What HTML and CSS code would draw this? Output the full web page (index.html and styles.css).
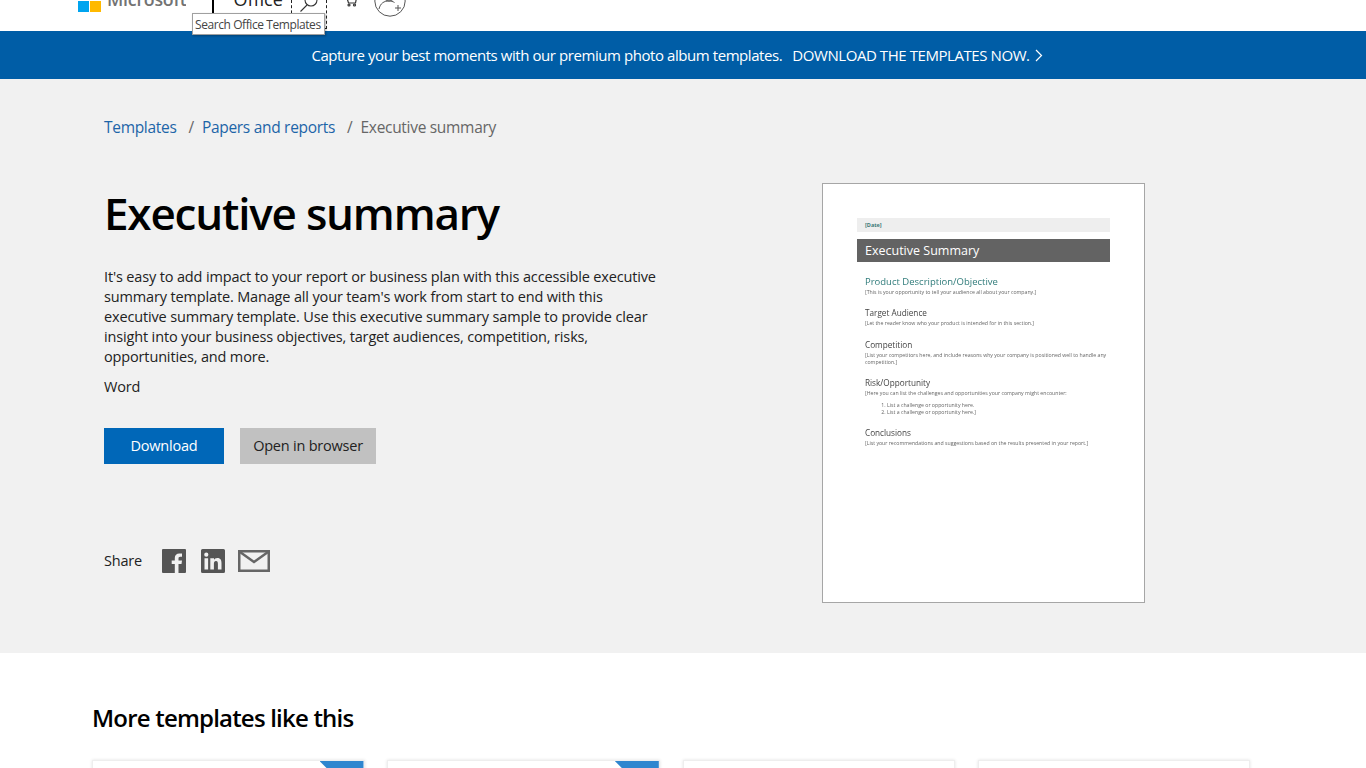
FILE: index.html
```html
<!DOCTYPE html>
<html lang="en">
<head>
<meta charset="utf-8">
<title>Executive summary</title>
<link rel="stylesheet" href="styles.css">
</head>
<body>
<header class="topbar">
  <div class="ms-logo">
    <svg class="ms-squares" width="23" height="23" viewBox="0 0 23 23"><rect x="0" y="0" width="11" height="11" fill="#f25022"/><rect x="12" y="0" width="11" height="11" fill="#7fba00"/><rect x="0" y="12" width="11" height="11" fill="#00a4ef"/><rect x="12" y="12" width="11" height="11" fill="#ffb900"/></svg>
    <span class="ms-name">Microsoft</span>
  </div>
  <div class="divider"></div>
  <span class="office">Office</span>
  <div class="search-box">
    <svg width="20" height="20" viewBox="0 0 20 20" fill="none" stroke="#333" stroke-width="1.1"><circle cx="12" cy="7" r="6"/><path d="M8 12 L1.500 18.500"/></svg>
  </div>
  <svg class="cart" width="14" height="14" viewBox="0 0 14 14" fill="none" stroke="#333" stroke-width="1.2"><path d="M1 0h2l1.500 5h7l1-5"/><circle cx="5" cy="7" r="1"/><circle cx="10.500" cy="7" r="1"/></svg>
  <svg class="person" width="32" height="32" viewBox="0 0 32 32" fill="none" stroke="#555" stroke-width="1"><circle cx="16" cy="16" r="15.200"/><circle cx="15" cy="10" r="6"/><path d="M5 24c1.500-6 5-8 10-8 2 0 4 .5 5.500 1.500"/><path d="M21 23h6M24 20v6"/></svg>
  <div class="tooltip">Search Office Templates</div>
</header>

<a class="banner" href="#">
  <span>Capture your best moments with our premium photo album templates.</span>
  <span class="banner-cta">DOWNLOAD THE TEMPLATES NOW.</span>
  <svg width="8" height="13" viewBox="0 0 8 13" fill="none" stroke="#fff" stroke-width="1.2"><path d="M1 1l5.500 5.500L1 12"/></svg>
</a>

<section class="hero">
  <nav class="crumbs">
    <a href="#">Templates</a><span class="sep">/</span><a href="#">Papers and reports</a><span class="sep">/</span><span class="current">Executive summary</span>
  </nav>
  <div class="hero-body">
    <div class="info">
      <h1>Executive summary</h1>
      <p class="desc">It's easy to add impact to your report or business plan with this accessible executive summary template. Manage all your team's work from start to end with this executive summary template. Use this executive summary sample to provide clear insight into your business objectives, target audiences, competition, risks, opportunities, and more.</p>
      <p class="app">Word</p>
      <div class="actions">
        <a class="btn primary" href="#">Download</a>
        <a class="btn secondary" href="#">Open in browser</a>
      </div>
      <div class="share">
        <span class="share-label">Share</span>
        <svg class="ic-fb" width="24" height="24" viewBox="0 0 24 24"><path fill="#555" d="M1 0h22a1 1 0 0 1 1 1v22a1 1 0 0 1-1 1h-6.500v-9h3l.5-3.500h-3.500V9.500c0-1 .4-1.700 1.800-1.700H20V4.600c-.4 0-1.500-.1-2.700-.1-2.700 0-4.500 1.600-4.500 4.600v2.400H9.700V15h3.100v9H1a1 1 0 0 1-1-1V1a1 1 0 0 1 1-1z"/></svg>
        <svg class="ic-in" width="24" height="24" viewBox="0 0 24 24"><path fill="#555" fill-rule="evenodd" d="M1.500 0h21A1.500 1.500 0 0 1 24 1.500v21a1.500 1.500 0 0 1-1.500 1.500h-21A1.500 1.500 0 0 1 0 22.500v-21A1.500 1.500 0 0 1 1.500 0zM3.500 9.200V20.500h3.600V9.200zM5.300 3.600a2.100 2.100 0 1 0 0 4.200 2.100 2.100 0 0 0 0-4.200zM9.300 9.200V20.500h3.600v-5.600c0-1.500.3-2.900 2.100-2.900s1.900 1.700 1.900 3v5.500h3.600v-6.200c0-3-.7-5.400-4.200-5.400-1.700 0-2.800.9-3.300 1.800V9.200z"/></svg>
        <svg class="ic-mail" width="32" height="22" viewBox="0 0 32 22" fill="none" stroke="#666" stroke-width="2.500"><rect x="1.250" y="1.250" width="29.500" height="19.500"/><path d="M2 2l14 10L30 2"/></svg>
      </div>
    </div>
    <figure class="doc">
      <div class="doc-date">[Date]</div>
      <div class="doc-title">Executive Summary</div>
      <div class="doc-section first">
        <div class="doc-h teal">Product Description/Objective</div>
        <p class="doc-p">[This is your opportunity to tell your audience all about your company.]</p>
      </div>
      <div class="doc-section">
        <div class="doc-h">Target Audience</div>
        <p class="doc-p">[Let the reader know who your product is intended for in this section.]</p>
      </div>
      <div class="doc-section">
        <div class="doc-h">Competition</div>
        <p class="doc-p">[List your competitors here, and include reasons why your company is positioned well to handle any competition.]</p>
      </div>
      <div class="doc-section">
        <div class="doc-h">Risk/Opportunity</div>
        <p class="doc-p">[Here you can list the challenges and opportunities your company might encounter:</p>
        <ol class="doc-list">
          <li>List a challenge or opportunity here.</li>
          <li>List a challenge or opportunity here.]</li>
        </ol>
      </div>
      <div class="doc-section">
        <div class="doc-h">Conclusions</div>
        <p class="doc-p">[List your recommendations and suggestions based on the results presented in your report.]</p>
      </div>
    </figure>
  </div>
</section>

<section class="more">
  <h2>More templates like this</h2>
  <div class="cards">
    <div class="card flag"></div>
    <div class="card flag"></div>
    <div class="card"></div>
    <div class="card"></div>
  </div>
</section>
</body>
</html>
```
FILE: styles.css
```css
* { box-sizing: border-box; }
html, body { margin: 0; padding: 0; height: 768px; overflow: hidden; background: #fff; }
body { font-family: "Open Sans", "Noto Sans", sans-serif; color: #222; }
a { text-decoration: none; }

.topbar { position: relative; height: 31px; display: flex; align-items: flex-start; padding-left: 78px; background: #fff; overflow: visible; }
.topbar > * { flex: none; }
.ms-logo { display: flex; align-items: flex-end; height: 12px; gap: 6px; overflow: hidden; }
.ms-squares { display: block; }
.ms-name { font-size: 17.700px; font-weight: 600; color: #737373; line-height: 24px; margin-bottom: 1px; letter-spacing: -0.2px; }
.divider { width: 2px; height: 13px; background: #000; margin-left: 26px; }
.office { font-size: 18px; line-height: 22px; height: 12px; overflow: hidden; margin-left: 19px; margin-top: -2px; display: flex; align-items: flex-end; color: #222; }
.search-box { width: 36px; height: 29px; margin-left: 8px; border: 1px dashed #222; border-top: 0; display: flex; justify-content: center; align-items: flex-end; overflow: hidden; padding-bottom: 15px; }
.search-box svg { display: block; flex: none; }
.cart { margin-left: 17px; margin-top: -2px; }
.person { margin-left: 16px; margin-top: -15px; }
.tooltip { position: absolute; left: 192px; top: 13px; width: 133px; height: 22px; background: #fff; border: 1px solid #a0a0a0; box-shadow: 1px 1px 2px rgba(0,0,0,.3); font-size: 12px; line-height: 22px; padding-left: 2px; color: #444; white-space: nowrap; letter-spacing: -0.42px; z-index: 2; }

.banner { height: 48px; background: #005da6; color: #fff; display: flex; align-items: center; justify-content: center; font-size: 15px; letter-spacing: -0.43px; gap: 10px; padding-right: 12px; }
.banner svg { margin-left: -5px; }

.hero { height: 574px; background: #f1f1f1; padding: 37px 0 0 104px; }
.crumbs { display: flex; font-size: 15.500px; line-height: 22px; letter-spacing: -0.3px; }
.crumbs a { color: #1d65a8; }
.sep { color: #666; margin: 0 8px 0 12px; }
.current { color: #666; }

.hero-body { display: flex; align-items: flex-start; margin-top: 45px; }
.info { width: 560px; }
h1 { margin: 0; font-size: 44px; line-height: 60px; font-weight: 600; color: #000; letter-spacing: -1.2px; }
.desc { width: 556px; margin: 24px 0 0; font-size: 14.500px; line-height: 20px; color: #222; letter-spacing: -0.15px; }
.app { margin: 10px 0 0; font-size: 14.500px; line-height: 20px; color: #222; letter-spacing: -0.15px; }
.actions { display: flex; gap: 16px; margin-top: 31px; }
.btn { height: 36px; display: flex; align-items: center; justify-content: center; font-size: 14.500px; letter-spacing: -0.22px; padding-bottom: 2px; }
.primary { width: 120px; background: #0067b8; color: #fff; }
.secondary { width: 136px; background: #c1c1c1; color: #222; }
.share { display: flex; align-items: center; margin-top: 85px; }
.share-label { font-size: 14.500px; color: #222; letter-spacing: -0.22px; width: 58px; padding-bottom: 2px; }
.ic-in { margin-left: 15px; }
.ic-mail { margin-left: 13px; }

.doc { width: 323px; height: 420px; margin: 0 0 0 158px; background: #fff; border: 1px solid #a6a6a6; padding: 34px 34px 0; }
.doc-date { height: 14px; background: #eeeeee; font-size: 5.500px; line-height: 14px; font-weight: 700; color: #3d7a78; padding-left: 8px; }
.doc-title { height: 23px; margin-top: 7px; background: #636363; color: #fff; font-size: 12.500px; line-height: 23px; padding-left: 8px; }
.doc-section { padding-left: 8px; margin-top: 10.250px; filter: blur(0.3px); }
.doc-section.first { margin-top: 13px; }
.doc-h { font-size: 8.200px; line-height: 14px; color: #444; }
.doc-h.teal { color: #2f7b7a; font-size: 9.500px; }
.doc-p { margin: 0; font-size: 5.200px; line-height: 7px; color: #666; }
.doc-list { margin: 5px 0 0; padding-left: 22px; font-size: 5.200px; line-height: 7px; color: #666; }

.more { padding: 49px 92px 0; }
h2 { margin: 0; font-size: 24px; line-height: 32px; font-weight: 600; color: #000; letter-spacing: -0.8px; }
.cards { display: grid; grid-template-columns: repeat(4, 272.500px); column-gap: 22.800px; margin-top: 26px; }
.card { position: relative; height: 200px; background: #fff; border: 1px solid #eee; box-shadow: 0 0 3px rgba(0,0,0,.12); overflow: hidden; }
.flag::after { content: ""; position: absolute; top: 0; right: 0; width: 44px; height: 44px; background: #2f86cf; clip-path: polygon(0 0, 100% 0, 100% 100%); }
```
